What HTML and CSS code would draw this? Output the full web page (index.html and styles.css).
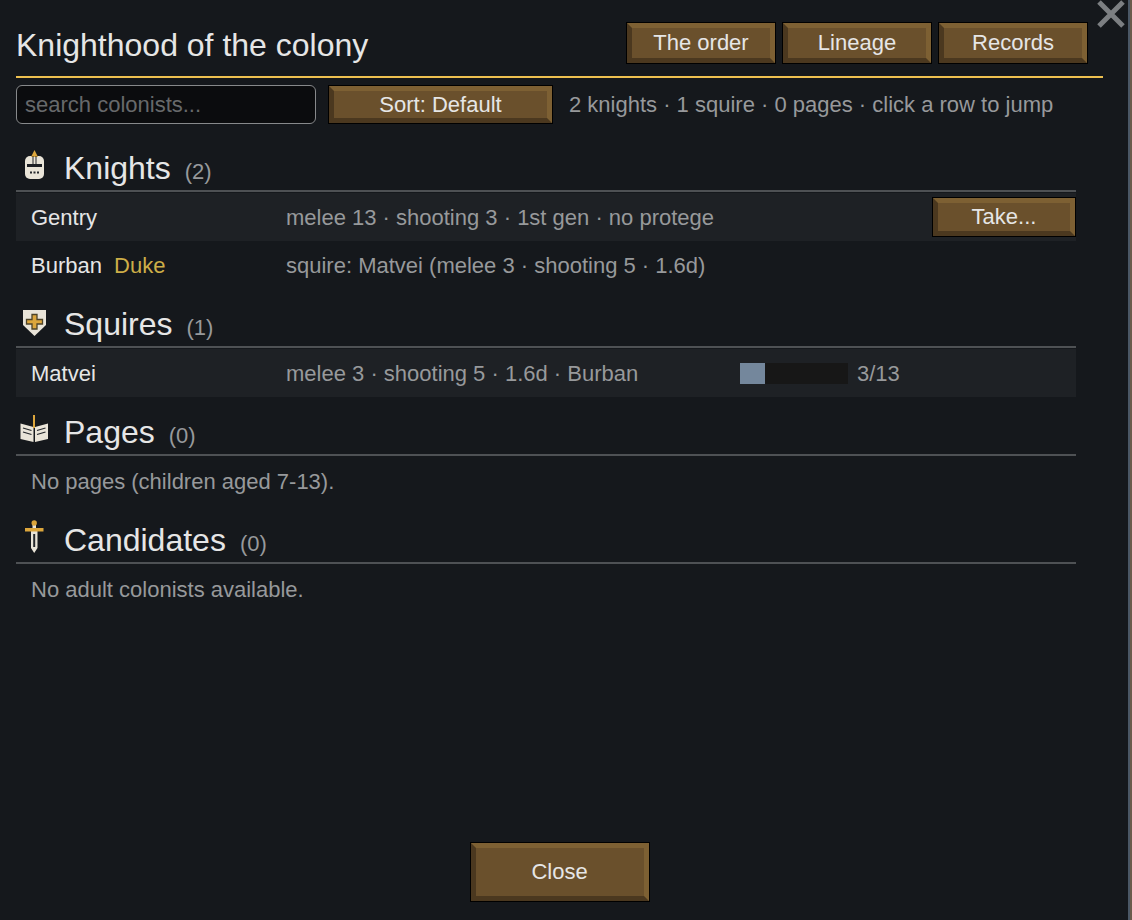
FILE: index.html
```html
<!DOCTYPE html>
<html lang="en">
<head>
    <meta charset="UTF-8">
    <meta name="viewport" content="width=device-width, initial-scale=1.0">
    <title>Knighthood of the colony</title>
    <link rel="stylesheet" href="styles.css">
</head>
<body>
    <main class="window">
        <button type="button" class="close-x" aria-label="Close window">
            <svg width="28" height="28" viewBox="0 0 28 28"><path d="M2 2L26 26M26 2L2 26" stroke="#7c7f82" stroke-width="5"/></svg>
        </button>

        <header class="header">
            <h1>Knighthood of the colony</h1>
            <nav class="tabs">
                <button type="button" class="btn">The order</button>
                <button type="button" class="btn">Lineage</button>
                <button type="button" class="btn">Records</button>
            </nav>
        </header>

        <div class="toolbar">
            <input type="text" class="search" placeholder="search colonists..." aria-label="Search colonists">
            <button type="button" class="btn sort">Sort: Default</button>
            <span class="muted">2 knights · 1 squire · 0 pages · click a row to jump</span>
        </div>

        <div class="list">
            <section>
                <div class="section-head">
                    <svg class="icon" width="36" height="36" viewBox="0 0 36 36">
                        <rect x="9" y="6" width="19" height="23" rx="5" fill="#e9e4d8"/>
                        <path d="M18.500 0L22 7H15z" fill="#dca63c"/>
                        <path d="M17 6v8M20 6v8" stroke="#24272b" stroke-width="1"/>
                        <rect x="11" y="14" width="15" height="3" fill="#1c1f24"/>
                        <path d="M14 22.500h2M17.500 22.500h2M21 22.500h2" stroke="#24272b" stroke-width="2"/>
                    </svg>
                    <h2>Knights</h2>
                    <span class="count">(2)</span>
                </div>
                <div class="row shaded">
                    <span class="name">Gentry</span>
                    <span class="stats">melee 13 · shooting 3 · 1st gen · no protege</span>
                    <button type="button" class="btn take">Take...</button>
                </div>
                <div class="row">
                    <span class="name">Burban <span class="title">Duke</span></span>
                    <span class="stats">squire: Matvei (melee 3 · shooting 5 · 1.6d)</span>
                </div>
            </section>

            <section>
                <div class="section-head">
                    <svg class="icon" width="36" height="36" viewBox="0 0 36 36">
                        <path d="M7 4H30V19L18.500 30L7 19z" fill="#e9e4d8"/>
                        <path d="M16 8.500h5v5h5.500v4.500h-5.500v5h-5v-5h-5.500v-4.500h5.500z" fill="#dca63c" stroke="#4d4328" stroke-width="1.300"/>
                    </svg>
                    <h2>Squires</h2>
                    <span class="count">(1)</span>
                </div>
                <div class="row shaded">
                    <span class="name">Matvei</span>
                    <span class="stats">melee 3 · shooting 5 · 1.6d · Burban</span>
                    <span class="progress">
                        <span class="bar"><span class="fill" style="width: 23%"></span></span>
                        <span class="stats">3/13</span>
                    </span>
                </div>
            </section>

            <section>
                <div class="section-head">
                    <svg class="icon" width="36" height="36" viewBox="0 0 36 36">
                        <path d="M4.500 9.500L17.500 13V28L4.500 25zM32 9.500L19 13V28L32 25z" fill="#e9e4d8"/>
                        <path d="M7 14l8.500 2.500M7 18l8.500 2.500M29.500 14L21 16.500M29.500 18L21 20.500" stroke="#24272b" stroke-width="1.300"/>
                        <path d="M18 1V14" stroke="#dca63c" stroke-width="2"/>
                    </svg>
                    <h2>Pages</h2>
                    <span class="count">(0)</span>
                </div>
                <p class="row stats">No pages (children aged 7-13).</p>
            </section>

            <section>
                <div class="section-head">
                    <svg class="icon" width="36" height="36" viewBox="0 0 36 36">
                        <path d="M16.500 2H20V8H21.500V26L18.200 31L15 26V8H16.500z" fill="#e9e4d8"/>
                        <path d="M18.200 12V25" stroke="#24272b" stroke-width="2"/>
                        <path d="M9 6H27.500V9.500H9z" fill="#dca63c"/>
                        <circle cx="18.200" cy="1" r="2.700" fill="#dca63c"/>
                    </svg>
                    <h2>Candidates</h2>
                    <span class="count">(0)</span>
                </div>
                <p class="row stats">No adult colonists available.</p>
            </section>
        </div>

        <footer class="footer">
            <button type="button" class="btn close">Close</button>
        </footer>
    </main>
</body>
</html>
```

FILE: styles.css
```css
* {
    box-sizing: border-box;
}

body {
    margin: 0;
    background: #6b5b4c;
    color: #e6e6e6;
    font-family: "Liberation Sans", Arial, sans-serif;
    font-size: 22px;
    line-height: 24px;
}

h1, h2, p {
    margin: 0;
    font-weight: normal;
}

.window {
    position: relative;
    display: flex;
    flex-direction: column;
    min-height: 100vh;
    margin-right: 2px;
    padding: 0 25px 18px 16px;
    background: #15181c;
    border-right: 2px solid #4a5765;
}

.close-x {
    position: absolute;
    top: 0;
    right: 3px;
    padding: 0;
    border: none;
    background: none;
    cursor: pointer;
}

.close-x svg {
    display: block;
}

.header {
    display: flex;
    align-items: center;
    justify-content: space-between;
    height: 78px;
    padding: 10px 15px 0 0;
    border-bottom: 2px solid #edc050;
}

h1, h2 {
    font-size: 32px;
    line-height: 36px;
}

h1 {
    padding-top: 4px;
}

.tabs {
    display: flex;
    gap: 6px;
}

/* beveled brown button */
.btn {
    width: 150px;
    height: 42px;
    padding: 0;
    background: #6a502c;
    border: 6px solid;
    border-color: #7d6033 #7d6033 #4b381f #4b381f;
    outline: 1px solid #000;
    outline-offset: -1px;
    color: #e6e6e6;
    font: inherit;
    cursor: pointer;
}

.toolbar {
    display: flex;
    align-items: center;
    margin-top: 7px;
}

.search {
    width: 300px;
    height: 39px;
    padding: 0 8px;
    background: #0b0c0e;
    border: 1px solid #87898b;
    border-radius: 6px;
    color: #e6e6e6;
    font: inherit;
}

.search::placeholder {
    color: #67696b;
}

.sort {
    width: 225px;
    height: 39px;
    margin: 0 16px 0 12px;
}

.muted, .stats, .count {
    color: #97999b;
}

.list {
    flex: 1;
    margin: 9px 27px 0 0;
}

.section-head {
    display: flex;
    align-items: baseline;
    height: 59px;
    padding-top: 17px;
    border-bottom: 2px solid #4e5154;
    margin-bottom: 1px;
}

.icon {
    align-self: flex-start;
    margin-right: 12px;
    overflow: visible;
}

.count {
    margin-left: 14px;
}

.row {
    display: grid;
    grid-template-columns: 255px 1fr 336px;
    align-items: center;
    height: 48px;
    padding-left: 15px;
}

.name, .stats {
    padding-top: 2px;
}

p.row {
    display: flex;
}

.shaded {
    background: #1e2125;
}

.title {
    margin-left: 6px;
    color: #cdae48;
}

.take {
    width: 144px;
    height: 40px;
    justify-self: end;
}

.progress {
    display: flex;
    align-items: center;
    gap: 9px;
}

.bar {
    width: 108px;
    height: 21px;
    background: #171717;
}

.fill {
    display: block;
    height: 100%;
    background: #74879c;
}

.footer {
    text-align: center;
}

.close {
    width: 180px;
    height: 60px;
    vertical-align: top;
}
```
